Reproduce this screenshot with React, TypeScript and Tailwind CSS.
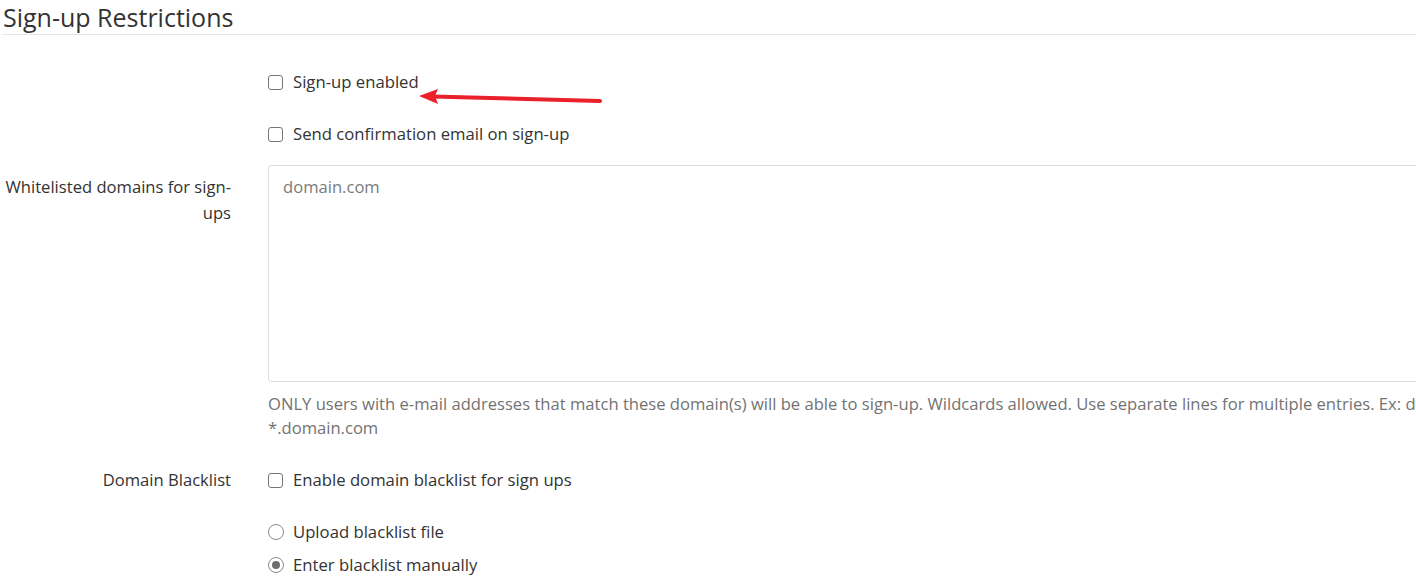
import React from "react";

const Checkbox = ({ label }: { label: string }) => (
  <label className="flex items-center h-[26px] text-[16.7px] text-[#333333]">
    <span className="w-[15px] h-[15px] border border-[#767676] rounded-[3px] bg-white mr-[10px]"></span>
    {label}
  </label>
);

const Radio = ({ label, checked }: { label: string; checked?: boolean }) => (
  <label className="flex items-center h-[26px] text-[16.7px] text-[#333333]">
    <span className="w-[16px] h-[16px] border border-[#8a8a8a] rounded-full bg-white mr-[9px] flex items-center justify-center">
      {checked && <span className="w-[8px] h-[8px] rounded-full bg-[#6e6e6e]"></span>}
    </span>
    {label}
  </label>
);

const App: React.FC = () => {
  return (
    <div
      className="relative w-[1416px] h-[584px] overflow-hidden bg-white text-[#333333]"
      style={{ fontFamily: '"Open Sans", "Noto Sans", sans-serif' }}
    >
      <h3 className="ml-[2px] h-[35px] border-b border-[#e5e5e5] text-[25px] leading-[34px] pl-[1px] text-[#333333]">
        Sign-up Restrictions
      </h3>

      <div className="grid grid-cols-[231px_1200px] gap-x-[37px] text-[16.6px]">
        <div></div>
        <div className="pt-[34px] flex flex-col gap-[26px]">
          <Checkbox label="Sign-up enabled" />
          <Checkbox label="Send confirmation email on sign-up" />
        </div>

        <div className="pt-[27px] text-right leading-[26px] whitespace-nowrap">
          Whitelisted domains for sign-
          <br />
          ups
        </div>
        <div className="pt-[18px]">
          <div className="w-[1220px] h-[217px] border border-[#dcdcdc] rounded-[3px] px-[14px] pt-[9px] text-[#7a7a7a]">
            domain.com
          </div>
          <p className="mt-[10px] leading-[24px] text-[#737373] whitespace-nowrap">
            ONLY users with e-mail addresses that match these domain(s) will be able to sign-up. Wildcards allowed. Use separate lines for multiple entries. Ex: domain.com,
            <br />
            *.domain.com
          </p>
        </div>

        <div className="pt-[27px] text-right leading-[26px]">Domain Blacklist</div>
        <div className="pt-[27px]">
          <Checkbox label="Enable domain blacklist for sign ups" />
          <div className="mt-[26px] flex flex-col gap-[7px]">
            <Radio label="Upload blacklist file" />
            <Radio label="Enter blacklist manually" checked />
          </div>
        </div>
      </div>

      <svg className="absolute left-0 top-0 pointer-events-none" width="1416" height="584">
        <line x1="432" y1="96.5" x2="600" y2="101" stroke="#e8212a" strokeWidth="4" strokeLinecap="round" />
        <polygon points="419,96 438,89 435,96 438,104" fill="#e8212a" />
      </svg>
    </div>
  );
};

export default App;
